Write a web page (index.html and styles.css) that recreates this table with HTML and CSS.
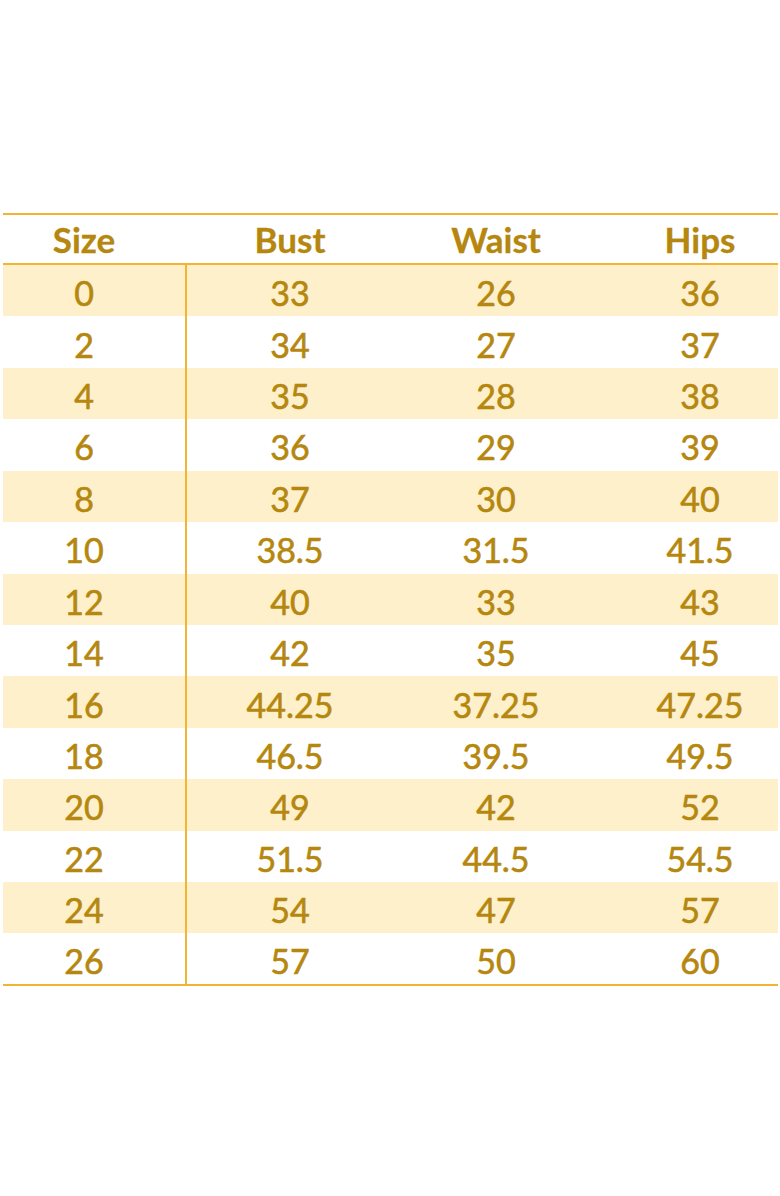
FILE: index.html
```html
<!DOCTYPE html>
<html lang="en">
<head>
<meta charset="utf-8">
<title>Size Chart</title>
<link rel="stylesheet" href="styles.css">
</head>
<body>
<div class="chart">
  <div class="row head">
    <div class="c c1">Size</div><div class="c">Bust</div><div class="c">Waist</div><div class="c c4">Hips</div>
  </div>
  <div class="row fill"><div class="c c1">0</div><div class="c">33</div><div class="c">26</div><div class="c c4">36</div></div>
  <div class="row"><div class="c c1">2</div><div class="c">34</div><div class="c">27</div><div class="c c4">37</div></div>
  <div class="row fill"><div class="c c1">4</div><div class="c">35</div><div class="c">28</div><div class="c c4">38</div></div>
  <div class="row"><div class="c c1">6</div><div class="c">36</div><div class="c">29</div><div class="c c4">39</div></div>
  <div class="row fill"><div class="c c1">8</div><div class="c">37</div><div class="c">30</div><div class="c c4">40</div></div>
  <div class="row"><div class="c c1">10</div><div class="c">38.5</div><div class="c">31.5</div><div class="c c4">41.5</div></div>
  <div class="row fill"><div class="c c1">12</div><div class="c">40</div><div class="c">33</div><div class="c c4">43</div></div>
  <div class="row"><div class="c c1">14</div><div class="c">42</div><div class="c">35</div><div class="c c4">45</div></div>
  <div class="row fill"><div class="c c1">16</div><div class="c">44.25</div><div class="c">37.25</div><div class="c c4">47.25</div></div>
  <div class="row"><div class="c c1">18</div><div class="c">46.5</div><div class="c">39.5</div><div class="c c4">49.5</div></div>
  <div class="row fill"><div class="c c1">20</div><div class="c">49</div><div class="c">42</div><div class="c c4">52</div></div>
  <div class="row"><div class="c c1">22</div><div class="c">51.5</div><div class="c">44.5</div><div class="c c4">54.5</div></div>
  <div class="row fill"><div class="c c1">24</div><div class="c">54</div><div class="c">47</div><div class="c c4">57</div></div>
  <div class="row last"><div class="c c1">26</div><div class="c">57</div><div class="c">50</div><div class="c c4">60</div></div>
</div>
</body>
</html>
```
FILE: styles.css
```css
html, body {
  margin: 0;
  padding: 0;
  background: #ffffff;
}
body {
  width: 780px;
  height: 1196px;
  overflow: hidden;
  font-family: Lato, "Liberation Sans", sans-serif;
  color: #b5870e;
}
.chart {
  margin: 213px 0 0 3px;
  width: 775px;
}
.row {
  display: grid;
  grid-template-columns: 184px 206px 206px 179px;
  height: 51.43px;
  font-size: 34px;
  box-sizing: border-box;
  -webkit-text-stroke: 0.6px #b5870e;
}
.row .c {
  display: flex;
  align-items: center;
  justify-content: center;
  padding-top: 4px;
  box-sizing: border-box;
}
.row .c1 {
  border-right: 2px solid #f2b532;
  padding-right: 20px;
}
.row .c4 {
  padding-left: 23px;
}
.fill {
  background: #fdf0cb;
}
.head {
  height: 52px;
  border-top: 2px solid #f2b532;
  border-bottom: 2px solid #f2b532;
  font-weight: 700;
  font-size: 35px;
  -webkit-text-stroke: 0.3px #b5870e;
}
.head .c {
  padding-top: 0;
}
.head .c1 {
  border-right: none;
  padding-right: 22px;
}
.last {
  border-bottom: 2px solid #f2b532;
  height: 53px;
}
```
